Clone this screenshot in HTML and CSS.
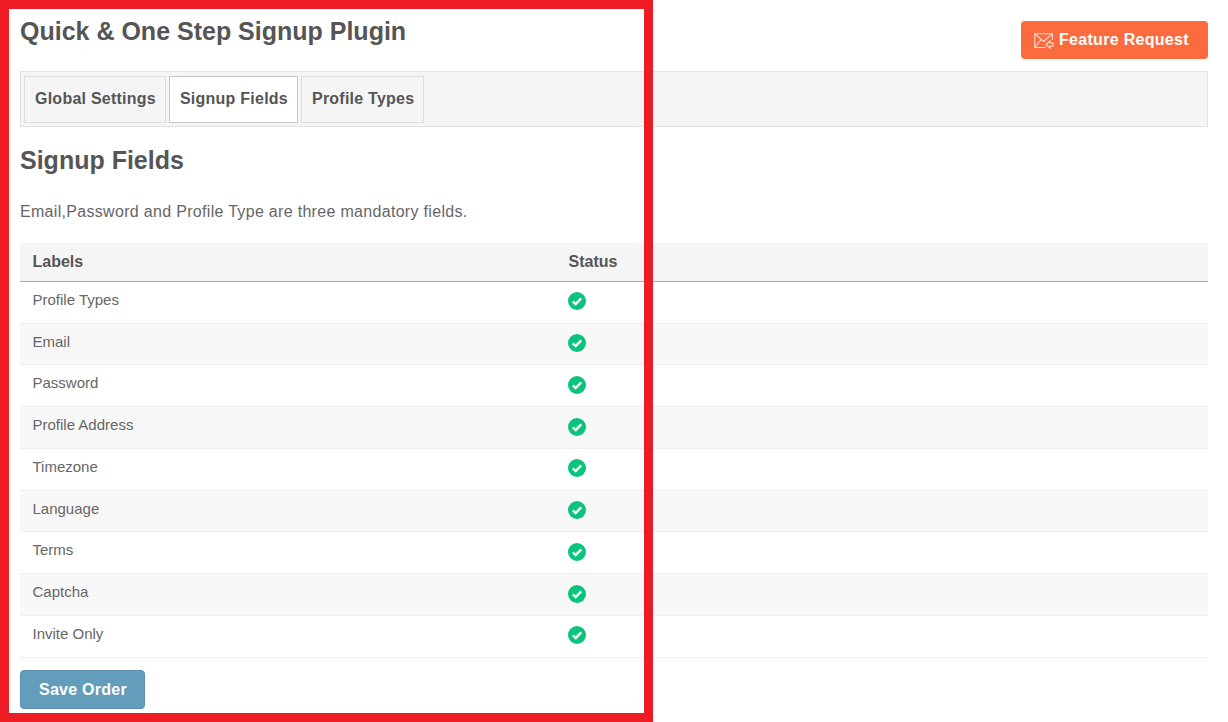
FILE: index.html
```html
<!DOCTYPE html>
<html lang="en">
<head>
<meta charset="utf-8">
<title>Signup Fields</title>
<link rel="stylesheet" href="styles.css">
</head>
<body>
<div class="page">
  <header class="top">
    <h1 class="title">Quick &amp; One Step Signup Plugin</h1>
    <a class="feature" href="#">
      <svg class="mail" width="20" height="16" viewBox="0 0 20 16" fill="none" stroke="#fff" stroke-width="1.1" opacity=".8">
        <path d="M11.5 14.5H.8V.8h17.6V7"/>
        <path d="M.8.8l8.8 7.6L18.4.8"/>
        <path d="M.8 14.5l6-7.5"/>
        <path d="M12 11.5l4-3.5v2h3v3h-3v2z"/>
      </svg>
      <span>Feature Request</span>
    </a>
  </header>
  <nav class="tabs">
    <a class="tab" href="#">Global Settings</a>
    <a class="tab active" href="#">Signup Fields</a>
    <a class="tab" href="#">Profile Types</a>
  </nav>
  <h2 class="heading">Signup Fields</h2>
  <p class="desc">Email,Password and Profile Type are three mandatory fields.</p>
  <table class="fields">
    <thead><tr><th>Labels</th><th>Status</th></tr></thead>
    <tbody>
      <tr><td>Profile Types</td><td><svg class="ok" viewBox="0 0 18 18"><use href="#check"/></svg></td></tr>
      <tr class="alt"><td>Email</td><td><svg class="ok" viewBox="0 0 18 18"><use href="#check"/></svg></td></tr>
      <tr><td>Password</td><td><svg class="ok" viewBox="0 0 18 18"><use href="#check"/></svg></td></tr>
      <tr class="alt"><td>Profile Address</td><td><svg class="ok" viewBox="0 0 18 18"><use href="#check"/></svg></td></tr>
      <tr><td>Timezone</td><td><svg class="ok" viewBox="0 0 18 18"><use href="#check"/></svg></td></tr>
      <tr class="alt"><td>Language</td><td><svg class="ok" viewBox="0 0 18 18"><use href="#check"/></svg></td></tr>
      <tr><td>Terms</td><td><svg class="ok" viewBox="0 0 18 18"><use href="#check"/></svg></td></tr>
      <tr class="alt"><td>Captcha</td><td><svg class="ok" viewBox="0 0 18 18"><use href="#check"/></svg></td></tr>
      <tr><td>Invite Only</td><td><svg class="ok" viewBox="0 0 18 18"><use href="#check"/></svg></td></tr>
    </tbody>
  </table>
  <button class="save" type="button">Save Order</button>
</div>
<svg class="defs" width="0" height="0">
  <symbol id="check" viewBox="0 0 18 18">
    <circle cx="9" cy="9" r="9" fill="#0ac47d"/>
    <path d="M4.8 9.4l2.9 2.7L13.2 6.3" fill="none" stroke="#eefbf5" stroke-width="2.5"/>
  </symbol>
</svg>
<div class="frame"></div>
</body>
</html>
```
FILE: styles.css
```css
* { box-sizing: border-box; }
html, body { margin: 0; height: 722px; overflow: hidden; background: #fff; }
body { font-family: "Liberation Sans", Arial, sans-serif; color: #555; }
.page { padding: 16px 20px 0; }
.top { display: flex; justify-content: space-between; align-items: flex-start; height: 55px; }
.title { margin: 1px 0 0; font-size: 25px; line-height: 28px; font-weight: 700; color: #555; }
.feature { display: flex; align-items: center; gap: 5px; margin-top: 5px; width: 187px; height: 38px; padding: 0 0 0 13px; border-radius: 4px; background: #fb6b3d; color: #fff; font-size: 16px; font-weight: 700; text-decoration: none; letter-spacing: .3px; }
.mail { margin-top: 2px; flex: none; }
.tabs { display: flex; gap: 3px; height: 56px; padding: 4px 3px; border: 1px solid #e2e2e2; background: #f5f5f5; }
.tab { display: flex; align-items: center; height: 47px; padding: 0 9px 2px 10px; border: 1px solid #dedede; background: #f5f5f5; color: #555; font-size: 16px; font-weight: 700; text-decoration: none; letter-spacing: .24px; }
.tab.active { background: #fff; border-color: #c8c8c8; }
.heading { margin: 18px 0 0; font-size: 25px; line-height: 30px; font-weight: 700; color: #555; }
.desc { margin: 27px 0 0; font-size: 16px; line-height: 20px; color: #666; letter-spacing: .31px; }
.fields { width: 100%; margin-top: 21px; border-collapse: collapse; table-layout: fixed; font-size: 15px; }
.fields th { height: 38.4px; padding: 0 12.5px; text-align: left; font-size: 16px; font-weight: 700; color: #555; background: #f5f5f5; border-bottom: 1px solid #aaa; }
.fields th:first-child { width: 536px; }
.fields td { height: 41.75px; padding: 0 12.5px 4px; color: #666; border-bottom: 1px solid #eee; }
.fields td:first-child { padding-bottom: 6px; }
.fields .alt td { background: #f8f8f8; }
.ok { display: block; width: 18px; height: 18px; margin: 2px 0 0 -1px; }
.save { display: block; width: 125px; height: 39px; margin-top: 12px; padding: 2px 0 0 1px; border: 1px solid #5a8fae; border-radius: 4px; background: #639dbc; color: #fff; font: 700 16px "Liberation Sans", Arial, sans-serif; letter-spacing: .25px; }
.defs { position: absolute; }
.frame { position: absolute; left: 0; top: 0; width: 653px; height: 722px; border: 9px solid #ed1c24; pointer-events: none; }
```
